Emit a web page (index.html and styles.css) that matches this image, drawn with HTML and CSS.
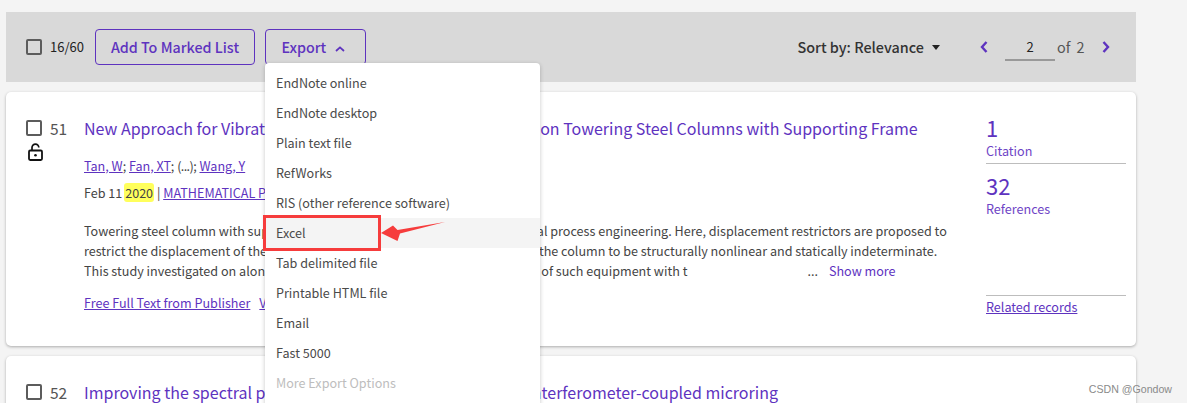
FILE: index.html
```html
<!DOCTYPE html>
<html lang="en">
<head>
<meta charset="utf-8">
<title>Results</title>
<link rel="stylesheet" href="styles.css">
</head>
<body>
<div class="page">
  <div class="toolbar">
    <span class="check"></span>
    <span class="count">16/60</span>
    <button class="btn btn-add">Add To Marked List</button>
    <div class="export-wrap">
      <button class="btn btn-export">Export
        <svg class="up" width="10" height="6" viewBox="0 0 10 6"><path d="M1 5l4-3.6L9 5" fill="none" stroke="#5e33bf" stroke-width="1.8"/></svg>
      </button>
      <ul class="menu">
        <li>EndNote online</li>
        <li>EndNote desktop</li>
        <li>Plain text file</li>
        <li>RefWorks</li>
        <li>RIS (other reference software)</li>
        <li class="hover">Excel</li>
        <li>Tab delimited file</li>
        <li>Printable HTML file</li>
        <li>Email</li>
        <li>Fast 5000</li>
        <li class="disabled">More Export Options</li>
      </ul>
      <span class="mark"></span>
      <svg class="arrow" width="66" height="20" viewBox="0 0 66 20"><path d="M0 11L12 3.5l4.5 4.5L64 0 19 11.5l-2.5 7.5z" fill="#f63c3c"/></svg>
    </div>
    <div class="sort">Sort by: Relevance<span class="caret"></span></div>
    <div class="pager">
      <svg width="8" height="12" viewBox="0 0 8 12"><path d="M6.5 1L2 6l4.5 5" fill="none" stroke="#5e33bf" stroke-width="2.4"/></svg>
      <span class="page-input">2</span>
      <span class="of">of 2</span>
      <svg width="8" height="12" viewBox="0 0 8 12"><path d="M1.5 1L6 6l-4.5 5" fill="none" stroke="#5e33bf" stroke-width="2.4"/></svg>
    </div>
  </div>

  <article class="card">
    <div class="side">
      <div class="side-row"><span class="check"></span><span class="num">51</span></div>
      <svg class="lock" width="15" height="18" viewBox="0 0 15 18"><path d="M4 8V4.5a3.4 3.4 0 0 1 6.8 0" fill="none" stroke="#111" stroke-width="1.7"/><rect x="1" y="7.5" width="13" height="9.5" rx="1.2" fill="none" stroke="#111" stroke-width="1.8"/><circle cx="7.5" cy="12.2" r="1.3" fill="#111"/></svg>
    </div>
    <div class="main">
      <h2 class="title">New Approach for Vibration Control via Displacement Limiter on Towering Steel Columns with Supporting Frame</h2>
      <p class="authors"><a>Tan, W</a>; <a>Fan, XT</a>; <span class="ellipsis">(...)</span>; <a>Wang, Y</a></p>
      <p class="meta">Feb 11 <mark>2020</mark> | <a>MATHEMATICAL PROBLEMS IN ENGINEERING</a></p>
      <div class="abstract">
        <p>Towering steel column with supporting frames are very widely used in chemical process engineering. Here, displacement restrictors are proposed to</p>
        <p>restrict the displacement of the column under heavy wind load, while causing the column to be structurally nonlinear and statically indeterminate.</p>
        <p class="last">This study investigated on along-wind vibration response and control features of such equipment with t<span class="more"><span class="dots">...</span><span class="show">Show more</span></span></p>
      </div>
      <p class="links"><a>Free Full Text from Publisher</a><a class="view">View</a></p>
    </div>
    <aside class="stats">
      <div class="stat first"><span class="big">1</span><span class="small">Citation</span></div>
      <div class="stat"><span class="big">32</span><span class="small">References</span></div>
      <a class="related">Related records</a>
    </aside>
  </article>

  <article class="card second">
    <div class="side">
      <div class="side-row"><span class="check"></span><span class="num">52</span></div>
    </div>
    <div class="main">
      <h2 class="title">Improving the spectral performance of a SOI Mach-Zehnder interferometer-coupled microring</h2>
    </div>
  </article>

  <span class="watermark">CSDN @Gondow</span>
</div>
</body>
</html>
```
FILE: styles.css
```css
* { box-sizing: border-box; }
html, body { margin: 0; height: 403px; overflow: hidden; }
body { background: #f4f4f4; font-family: "Noto Sans CJK SC", "Liberation Sans", sans-serif; color: #444; }
p, h2, ul { margin: 0; padding: 0; }
a { color: #5e33bf; }
.page { position: relative; padding: 12px 51px 0 6px; height: 403px; overflow: hidden; }

.toolbar { height: 70px; background: #d9d9d9; display: flex; align-items: center; padding: 0 26px 0 20px; }
.check { width: 16px; height: 16px; border: 2px solid #5c5c5c; border-radius: 2px; flex: none; background: transparent; }
.count { font-size: 13px; line-height: 20px; color: #222; margin-left: 8px; }
.btn { font-family: inherit; font-size: 14.3px; font-weight: 500; line-height: 20px; color: #5e33bf; background: transparent; border: 1px solid #5e33bf; border-radius: 4px; height: 36px; padding: 0; display: block; }
.btn-add { width: 160px; margin-left: 11px; }
.export-wrap { position: relative; margin-left: 10px; }
.btn-export { width: 101px; padding-right: 5px; }
.up { margin-left: 5px; vertical-align: 1px; }
.menu { position: absolute; left: 0; top: 34px; width: 275px; height: 360px; list-style: none; background: #fff; border-radius: 4px; box-shadow: 0 1px 4px rgba(0,0,0,.22); padding-top: 5px; z-index: 2; }
.menu li { height: 30px; line-height: 30px; padding-left: 11px; font-size: 12.6px; color: #4a4a4a; }
.menu li.hover { background: #f4f4f4; }
.menu li.disabled { color: #bdbdbd; }
.mark { position: absolute; left: -2px; top: 186px; width: 118px; height: 36px; border: 3px solid #f63c3c; z-index: 3; }
.arrow { position: absolute; left: 116px; top: 193px; z-index: 3; }

.sort { margin-left: auto; font-size: 14.4px; font-weight: 500; line-height: 20px; color: #333; display: flex; align-items: center; }
.caret { width: 0; height: 0; border: 4.5px solid transparent; border-top: 5px solid #222; border-bottom: 0; margin-left: 8px; }
.pager { display: flex; align-items: center; margin-left: 40px; }
.page-input { width: 50px; height: 26px; margin: 0 2px 0 17px; border-bottom: 2px solid #999; text-align: center; font-size: 13px; line-height: 24px; color: #222; transform: translateY(1px); }
.of { width: 45px; font-size: 14.4px; line-height: 20px; color: #555; word-spacing: 3px; }

.card { margin-top: 10px; height: 254px; background: #fff; border-radius: 5px; box-shadow: 0 1px 3px rgba(0,0,0,.3); display: flex; padding: 27px 10px 0 20px; position: relative; }
.card.second { height: 80px; }
.side { width: 58px; flex: none; }
.side-row { display: flex; align-items: center; height: 18px; }
.num { font-size: 15.5px; line-height: 18px; color: #555; margin-left: 8px; }
.lock { display: block; margin: 6px 0 0 2px; }
.main { width: 880px; flex: none; }
.title { font-size: 16px; font-weight: 400; line-height: 20px; color: #5e33bf; white-space: nowrap; margin-top: -1px; }
.authors { font-size: 12.6px; line-height: 20px; margin-top: 18px; color: #444; }
.authors a, .meta a, .links a, .related { text-decoration: underline; }
.ellipsis { letter-spacing: -.6px; }
.meta { font-size: 12.6px; line-height: 20px; margin-top: 7px; color: #444; }
.meta mark { background: #ffff5c; border-radius: 3px; color: #444; margin-left: -1px; padding: 0 1px; }
.abstract { margin-top: 18px; font-size: 12.6px; line-height: 20px; color: #444; }
.abstract p { white-space: nowrap; }
.more { margin-left: 120px; }
.dots { margin-right: 11px; }
.show { color: #5e33bf; }
.links { font-size: 12.6px; line-height: 20px; margin-top: 12px; }
.view { margin-left: 9px; }

.stats { width: 140px; margin-left: 22px; flex: none; display: flex; flex-direction: column; height: 220px; }
.stat { display: flex; flex-direction: column; }
.stat.first { height: 49px; margin-top: -4px; padding-top: 1px; border-bottom: 1px solid #bdbdbd; }
.stat + .stat { padding-top: 10px; height: 132px; border-bottom: 1px solid #bdbdbd; }
.big { font-size: 22px; line-height: 22px; color: #5e33bf; }
.small { font-size: 12.6px; line-height: 20px; color: #6e44c6; margin-top: 3px; }
.related { font-size: 12.6px; line-height: 20px; margin-top: 1px; }

.watermark { position: absolute; right: 15px; top: 382px; font-family: "Liberation Sans", sans-serif; font-size: 10.6px; line-height: 14px; color: #8a8a8a; z-index: 4; }
```
